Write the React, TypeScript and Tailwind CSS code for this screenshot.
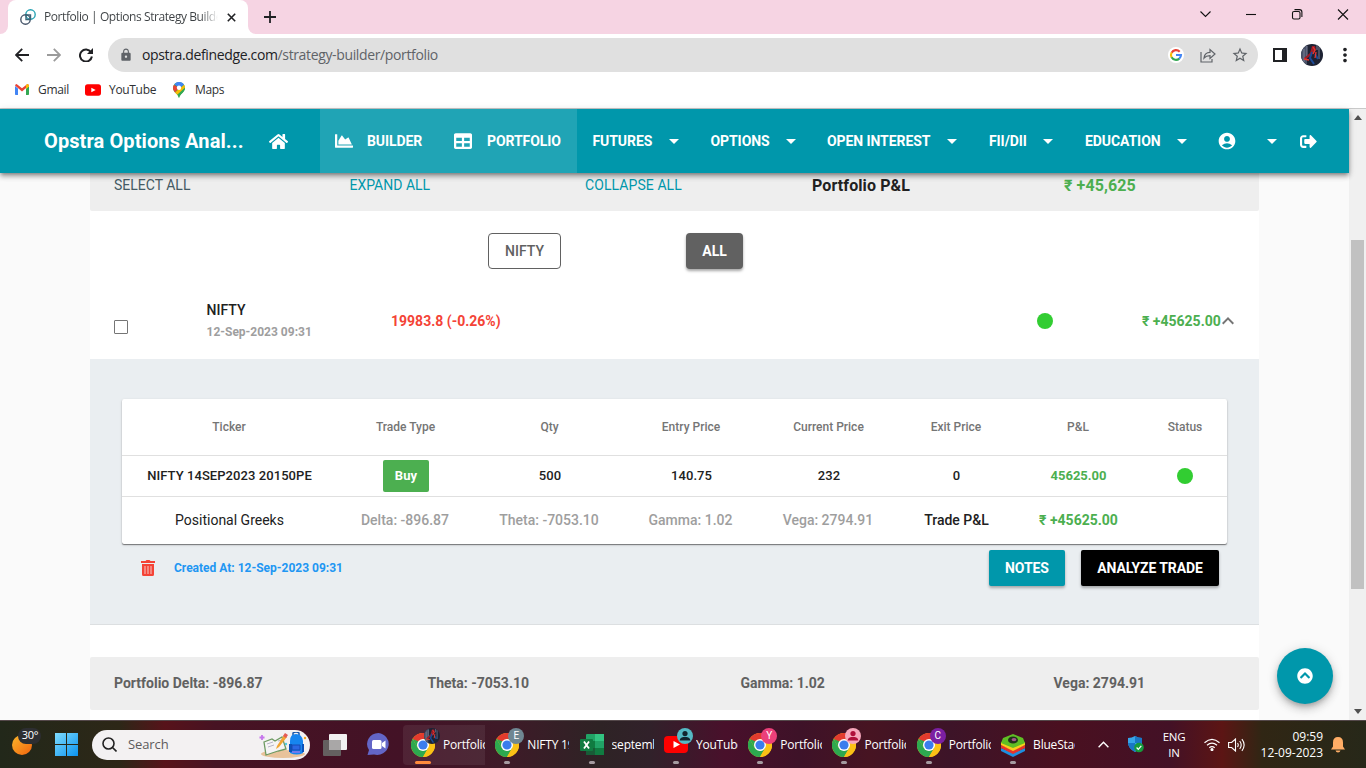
import React from "react";
import { FaHome, FaChartArea, FaTable, FaSignOutAlt, FaChevronCircleUp } from "react-icons/fa";
import { MdArrowDropDown, MdAccountCircle, MdLock, MdStarBorder, MdMoreVert, MdKeyboardArrowUp } from "react-icons/md";

const UI = "font-['Open_Sans','Noto_Sans',sans-serif]";

function ChromeIcon() {
  return (
    <svg width="24" height="24" viewBox="0 0 24 24">
      <circle cx="12" cy="12" r="12" fill="#fbc116" />
      <path d="M12 12 L1.6 6 A12 12 0 0 1 22.4 6 Z" fill="#e33b2e" />
      <path d="M1.6 6 A12 12 0 0 0 12 24 L17.2 15 L12 12 L6.8 15 Z" fill="#2da94f" />
      <path d="M12 6 H22.4 A12 12 0 0 1 12 24 L17.2 15 Z" fill="#fbc116" />
      <path d="M1.6 6 L6.8 15 L9 9 Z" fill="#2da94f" />
      <circle cx="12" cy="12" r="6" fill="#fff" />
      <circle cx="12" cy="12" r="4.6" fill="#3b7ded" />
    </svg>
  );
}

function HeroAvatar({ size }: { size: number }) {
  return (
    <svg width={size} height={size} viewBox="0 0 22 22" className="rounded-full">
      <rect width="22" height="22" fill="#1d2233" />
      <path d="M0 3 L6 0 V22 H0Z" fill="#4a5268" />
      <path d="M3 5v13M6 2v10M18 3v12M16 1v5" stroke="#7b7e96" strokeWidth="1" />
      <path d="M11 2 L14 2 L15 6 L13 9 L9 12 L4 16 L3 14 L9 9 Z" fill="#9c1c28" />
      <path d="M11 8 L9 14 L13 20 M14 10 L17 15" stroke="#1c4a96" strokeWidth="2" fill="none" />
      <path d="M12 3 L14 6 L12 10 M3 15 L8 16 M15 8 L14 14" stroke="#e8362e" strokeWidth="1.3" fill="none" />
    </svg>
  );
}

function ExcelIcon() {
  return (
    <svg width="24" height="24" viewBox="0 0 24 24">
      <rect x="6" y="1" width="18" height="21" rx="1" fill="#21a366" />
      <rect x="15" y="1" width="9" height="7" fill="#33c481" />
      <rect x="6" y="8" width="9" height="7" fill="#107c41" />
      <rect x="6" y="15" width="18" height="7" fill="#185c37" />
      <rect x="15" y="15" width="9" height="7" fill="#107c41" />
      <rect x="0" y="6" width="13" height="12" rx="1" fill="#107c41" />
      <path d="M4 8.5 L9 15.5 M9 8.5 L4 15.5" stroke="#fff" strokeWidth="1.8" />
    </svg>
  );
}

function YouTubeIcon({ w, h }: { w: number; h: number }) {
  return (
    <svg width={w} height={h} viewBox="0 0 24 17">
      <rect width="24" height="17" rx="4" fill="#f00" />
      <path d="M9.5 5 L16 8.5 L9.5 12Z" fill="#fff" />
    </svg>
  );
}

function BlueStacksIcon() {
  return (
    <svg width="24" height="24" viewBox="0 0 24 24">
      <path d="M0 15 L12 20 L24 15 V18 L12 24 L0 18Z" fill="#1c8fe0" />
      <path d="M0 12 L12 17 L24 12 V15 L12 21 L0 15Z" fill="#e5342b" />
      <path d="M0 9 L12 14 L24 9 V12 L12 18 L0 12Z" fill="#f9cf1c" />
      <path d="M2 5 L12 1 L22 5 L24 10 L12 15 L0 10Z" fill="#5fbf24" />
      <ellipse cx="12" cy="7" rx="5" ry="3.6" fill="#22311c" />
      <ellipse cx="13" cy="6.6" rx="2.4" ry="1.7" fill="#a3588c" />
    </svg>
  );
}

function NavText({ label, width, pad }: { label: string; width: string; pad?: string }) {
  return (
    <div className={"flex h-16 items-center justify-between " + width + " " + (pad ?? "")}>
      <span className="whitespace-nowrap">{label}</span>
      <MdArrowDropDown size={24} />
    </div>
  );
}

function Task({ label, children, badge, active }: { label: string; children: React.ReactNode; badge?: React.ReactNode; active?: boolean }) {
  return (
    <div className={"relative flex h-10 w-[82px] shrink-0 items-center overflow-hidden rounded-l pl-2 " + (active ? "bg-white/[.07]" : "")}>
      <div className="flex h-6 w-6 shrink-0 items-center justify-center">{children}</div>
      <div className="absolute left-[21px] top-[3px]">{badge}</div>
      <span className="ml-2 w-[42px] overflow-hidden whitespace-nowrap text-[12px] leading-5 tracking-[-0.2px] text-white">{label}</span>
      <div className={"absolute bottom-px h-[3px] rounded-full " + (active ? "left-3 w-4 bg-[#ff8a3c]" : "left-[17px] w-[6px] bg-[#a59aa0]")} />
    </div>
  );
}

const badgeBase = "flex h-4 w-4 items-center justify-center rounded-full text-[10px] leading-none font-[Roboto,sans-serif] ";

function PersonBadge({ bg, fg }: { bg: string; fg: string }) {
  return (
    <svg width="16" height="16" viewBox="0 0 16 16">
      <circle cx="8" cy="8" r="8" fill={bg} />
      <circle cx="8" cy="5.6" r="2.6" fill={fg} />
      <path d="M2.7 12.5 C3 9.3 6 9 8 9 S13 9.3 13.3 12.5Z" fill={fg} />
    </svg>
  );
}

const cols = "grid grid-cols-[215px_138px_150px_133px_142px_113px_131px_83px] items-center text-center";

export default function App() {
  return (
    <div className="flex h-[768px] w-[1366px] flex-col overflow-hidden bg-white font-[Roboto,sans-serif]">
      {/* Tab strip */}
      <div className={"flex h-[34px] shrink-0 bg-[#f6d4e3] " + UI}>
        <div className="flex w-2 items-end bg-white"><div className="h-full w-2 rounded-br-lg bg-[#f6d4e3]" /></div>
        <div className="flex w-[240px] items-center rounded-t-lg bg-white pl-3">
          <svg width="16" height="16" viewBox="0 0 16 16" fill="none" strokeWidth="1.4">
            <circle cx="10.5" cy="5.5" r="4.7" stroke="#28a3b3" />
            <circle cx="5.5" cy="10.5" r="4.7" stroke="#47566b" />
            <path d="M6 6h4.5v4.5H6z" stroke="#3a6478" />
          </svg>
          <span className="ml-2 w-[174px] overflow-hidden whitespace-nowrap bg-gradient-to-r from-[#3c4043] from-90% to-transparent bg-clip-text text-[12px] leading-4 tracking-[-0.42px] text-transparent">Portfolio | Options Strategy Builder</span>
          <svg className="ml-[9px]" width="9" height="9" viewBox="0 0 9 9"><path d="M.8 .8 8.2 8.2M8.2 .8 .8 8.2" stroke="#202124" strokeWidth="1.6" /></svg>
        </div>
        <div className="flex w-2 bg-white"><div className="h-full w-2 rounded-bl-lg bg-[#f6d4e3]" /></div>
        <svg className="ml-2 mt-[11px]" width="12" height="12" viewBox="0 0 12 12"><path d="M6 0v12M0 6h12" stroke="#202124" strokeWidth="1.8" /></svg>
        <div className="ml-auto flex items-start pt-[9px]">
          <svg width="166" height="11" viewBox="0 0 166 11" fill="none" stroke="#111" strokeWidth="1.1">
            <path d="M.5 2.5 5.5 7.5 10.5 2.5" />
            <path d="M46 5.5h10" />
            <rect x="92.5" y="2.5" width="7.5" height="7.5" rx="1.5" />
            <path d="M94.5 .6h5a2.4 2.4 0 0 1 2.4 2.4v5" />
            <path d="M138 .5l10 10M148 .5l-10 10" />
          </svg>
        </div>
      </div>

      {/* Address bar */}
      <div className={"flex h-[42px] shrink-0 items-center bg-white " + UI}>
        <svg className="ml-[15px]" width="14" height="14" viewBox="0 0 14 14" fill="none" stroke="#202124" strokeWidth="1.8"><path d="M14 7H1.5M7.2 .8 1 7l6.2 6.2" /></svg>
        <svg className="ml-[18px]" width="14" height="14" viewBox="0 0 14 14" fill="none" stroke="#9b9b9b" strokeWidth="1.8"><path d="M0 7h12.500M6.800 .8 13 7l-6.200 6.200" /></svg>
        <svg className="ml-[18px] mr-[4px]" width="14" height="14" viewBox="0 0 14 14">
          <path d="M12 4.200A6 6 0 1 0 12.900 8.500" fill="none" stroke="#202124" strokeWidth="2" />
          <path d="M14 0v6H8Z" fill="#202124" />
        </svg>
        <div className="ml-[11px] flex h-[34px] w-[1150px] items-center rounded-full bg-[#e0e0e0] pl-[11px] text-[#5f6368]">
          <MdLock size={14} />
          <span className="ml-[9px] whitespace-nowrap text-[14px] leading-5 tracking-[-0.36px]"><span className="text-[#202124]">opstra.definedge.com</span>/strategy-builder/portfolio</span>
          <div className="ml-auto flex items-center pr-[9px]">
            <svg width="16" height="16" viewBox="0 0 16 16">
              <circle cx="8" cy="8" r="8" fill="#fff" />
              <g fill="none" strokeWidth="2.1">
                <path d="M11.7 4.7A5 5 0 0 0 3.6 5.8" stroke="#ea4335" />
                <path d="M3.6 5.6a5 5 0 0 0 0 4.8" stroke="#fbbc05" />
                <path d="M3.6 10.3a5 5 0 0 0 7.7 1.3" stroke="#34a853" />
                <path d="M8 8h5a5 5 0 0 1-1.8 3.7" stroke="#4285f4" />
              </g>
            </svg>
            <svg className="ml-4" width="16" height="15" viewBox="0 0 16 15" fill="none" stroke="#5f6368" strokeWidth="1.2"><path d="M1 4v10h11v-3M4 10c.4-4 2.7-5.5 6-5.6V1.5l5 4.5-5 4.5V7.6C7.3 7.6 5.500 8.2 4 10Z" /></svg>
            <MdStarBorder className="ml-[15px]" size={18} />
          </div>
        </div>
        <svg className="ml-[15px]" width="14" height="14" viewBox="0 0 14 14"><rect x="1" y="1" width="12" height="12" fill="#fff" stroke="#202124" strokeWidth="2" /><rect x="9" y="1" width="5" height="12" fill="#202124" /></svg>
        <div className="ml-[14px]"><HeroAvatar size={22} /></div>
        <MdMoreVert className="ml-[11px] text-[#202124]" size={22} />
      </div>

      {/* Bookmarks */}
      <div className={"flex h-[33px] shrink-0 items-center border-b border-[#c9c9c9] pb-[5px] text-[12px] tracking-[-0.32px] text-[#2f3134] " + UI}>
        <svg className="ml-[15px]" width="14" height="11" viewBox="0 0 14 11">
          <path d="M0 2v8.200q0 .8.800.8H3V4.500Z" fill="#4285f4" />
          <path d="M11 4.500V11h2.200q.8 0 .8-.8V2Z" fill="#34a853" />
          <path d="M0 1.600Q.3 0 1.600 0L7 4.200 12.400 0Q13.700 0 14 1.600L7 7.600Z" fill="#ea4335" />
          <path d="M11 1.100 12.400 0Q13.700 0 14 1.600V2.400L11 5Z" fill="#fbbc04" />
        </svg>
        <span className="ml-[9px] w-[31px]">Gmail</span>
        <div className="ml-4"><YouTubeIcon w={16} h={12} /></div>
        <span className="ml-2 w-[46px]">YouTube</span>
        <svg className="ml-[18px]" width="12" height="16" viewBox="0 0 12 16">
          <path d="M6 0a6 6 0 0 0-6 6c0 4.500 5 5.500 6 10 1-4.500 6-5.500 6-10a6 6 0 0 0-6-6Z" fill="#34a853" />
          <path d="M1 2.800 6 6 2 10.500Q0 8.500 0 6 0 4 1 2.800Z" fill="#ea4335" />
          <path d="M2 10.500 11 2.800Q12 4 12 6L5 13Q3.500 12 2 10.500Z" fill="#fbbc04" />
          <path d="M4.500 12.500 12 5.500C12 10.500 7 11.500 6 16Z" fill="#34a853" />
          <path d="M1.300 2.300A6 6 0 0 1 11 2.500L7 6 5 5Z" fill="#4285f4" />
          <circle cx="6" cy="5.800" r="2.200" fill="#fff" />
        </svg>
        <span className="ml-[10px]">Maps</span>
      </div>

      {/* Page */}
      <div className="flex h-[611px] shrink-0">
        <div className="relative flex w-[1349px] flex-col bg-[#fafafa]">
          <header className="relative z-10 flex h-16 shrink-0 items-center bg-[#0097ab] text-[14px] font-bold tracking-[-0.08px] text-white shadow-[0_2px_4px_-1px_rgba(0,0,0,.35),0_4px_5px_rgba(0,0,0,.2),0_1px_8px_rgba(0,0,0,.12)]">
            <span className="ml-11 w-[210px] whitespace-nowrap text-[20px] tracking-[0.1px]">Opstra Options Anal...</span>
            <div className="flex w-[66px] pl-[15px]"><FaHome size={19} /></div>
            <div className="flex h-16 w-[119px] items-center bg-white/[.125] pl-[15px]">
              <FaChartArea size={18} /><span className="ml-[14px]">BUILDER</span>
            </div>
            <div className="flex h-16 w-[138px] items-center bg-white/[.125] pl-[15px]">
              <FaTable size={18} /><span className="ml-[15px]">PORTFOLIO</span>
            </div>
            <NavText label="FUTURES" width="w-[93px]" pad="ml-[15.500px]" />
            <NavText label="OPTIONS" width="w-[92px]" pad="ml-[25px]" />
            <NavText label="OPEN INTEREST" width="w-[137px]" pad="ml-[24.500px]" />
            <NavText label="FII/DII" width="w-[71px]" pad="ml-[25px]" />
            <NavText label="EDUCATION" width="w-[109px]" pad="ml-[25px]" />
            <MdAccountCircle className="ml-[23px]" size={20} />
            <MdArrowDropDown className="ml-[23px]" size={24} />
            <FaSignOutAlt className="ml-4" size={17} />
          </header>

          <main className="ml-[90px] flex w-[1169px] flex-1 flex-col bg-white">
            <div className="flex h-[38px] shrink-0 items-center rounded-b-xs bg-[#eee] pb-[13px] pl-6 text-[14px] text-[#0097ab]">
              <span className="w-[235.500px] text-[#455a64]">SELECT ALL</span>
              <span className="w-[235.500px]">EXPAND ALL</span>
              <span className="w-[227px] tracking-[0.08px]">COLLAPSE ALL</span>
              <span className="w-[252px] text-[16px] font-bold tracking-[0.1px] text-[#212121]">Portfolio P&amp;L</span>
              <span className="text-[16px] font-bold tracking-[0.1px] text-[#4caf50]">₹ +45,625</span>
            </div>

            <div className="flex h-[80px] shrink-0 items-center text-[14px] font-medium">
              <div className="ml-[398px] flex h-9 w-[73px] items-center justify-center rounded border border-[#616161] text-[#616161]">NIFTY</div>
              <div className="ml-[125px] flex h-9 w-[57px] items-center justify-center rounded bg-[#616161] font-bold text-white shadow-[0_2px_3px_rgba(0,0,0,.35)]">ALL</div>
            </div>

            <div className="flex h-[68px] shrink-0 items-center pb-[8px] text-[14px]">
              <div className="ml-6 mt-[12px] h-[14px] w-[14px] rounded-[1px] border border-[#757575]" />
              <div className="ml-[78.500px] w-[184.500px]">
                <div className="-mt-px h-[23px] leading-[22px] font-medium text-[#212121]">NIFTY</div>
                <div className="h-[21px] text-[12px] leading-[21px] font-bold text-[#9e9e9e]">12-Sep-2023 09:31</div>
              </div>
              <span className="w-[645.500px] font-bold text-[#f44336]">19983.8 (-0.26%)</span>
              <div className="h-4 w-4 rounded-full bg-[#32cd32]" />
              <span className="ml-[89.500px] w-[79px] whitespace-nowrap font-bold text-[#4caf50]">₹ +45625.00</span>
              <MdKeyboardArrowUp className="-ml-[5px] text-[#757575]" size={24} />
            </div>

            <section className="h-[266px] shrink-0 border-b border-[#dcdfe1] bg-[#eaeef1] pt-10 pl-8">
              <div className="w-[1105px] rounded-xs bg-white shadow-[0_1px_1px_rgba(0,0,0,.45),0_1px_3px_rgba(0,0,0,.15)]">
                <div className={cols + " h-[57px] border-b border-[#e0e0e0] text-[12px] font-medium text-[#757575]"}>
                  {["Ticker", "Trade Type", "Qty", "Entry Price", "Current Price", "Exit Price", "P&L", "Status"].map((h) => <span key={h} className="-ml-px">{h}</span>)}
                </div>
                <div className={cols + " h-[41px] border-b border-[#e0e0e0] text-[13px] font-medium tracking-[0.07px] text-[#212121]"}>
                  <span>NIFTY 14SEP2023 20150PE</span>
                  <span className="mx-auto flex h-8 w-[46px] items-center justify-center rounded-xs bg-[#4caf50] font-bold text-white">Buy</span>
                  <span>500</span><span>140.75</span><span>232</span><span>0</span>
                  <span className="font-bold tracking-normal text-[#4caf50]">45625.00</span>
                  <span className="-mt-px ml-[33px] h-4 w-4 rounded-full bg-[#32cd32]" />
                </div>
                <div className={cols + " h-[47px] text-[14px] font-medium text-[#9e9e9e]"}>
                  <span className="font-normal text-[#212121]">Positional Greeks</span>
                  <span className="-ml-[2px]">Delta: -896.87</span><span className="-ml-[2px]">Theta: -7053.10</span><span className="-ml-[2px]">Gamma: 1.02</span><span className="-ml-[2px]">Vega: 2794.91</span>
                  <span className="text-[#212121]">Trade P&amp;L</span>
                  <span className="font-bold text-[#4caf50]">₹ +45625.00</span>
                </div>
              </div>
              <div className="mt-[6px] flex h-9 w-[1105px] items-center text-[14px] font-bold tracking-[-0.08px] text-white">
                <svg className="ml-[19px]" width="14" height="16" viewBox="0 0 14 16">
                  <path d="M0 1h4.500L5.500 0h3l1 1H14v2H0ZM1 4h12v10.500q0 1.500-1.500 1.500h-9Q1 16 1 14.500Z" fill="#f44336" />
                  <path d="M4 6v8M7 6v8M10 6v8" stroke="#f5a39d" strokeWidth="1.4" />
                </svg>
                <span className="ml-[19px] text-[12px] tracking-normal text-[#2196f3]">Created At: 12-Sep-2023 09:31</span>
                <div className="ml-auto flex h-9 w-[76px] items-center justify-center rounded-xs bg-[#0097ab] shadow-[0_2px_3px_rgba(0,0,0,.3)]">NOTES</div>
                <div className="mr-2 ml-4 flex h-9 w-[138px] items-center justify-center rounded-xs bg-black shadow-[0_2px_3px_rgba(0,0,0,.3)]">ANALYZE TRADE</div>
              </div>
            </section>

            <div className="mt-8 flex h-[53px] shrink-0 items-center rounded-xs bg-[#eee] pl-6 text-[14px] font-bold text-[#616161]">
              <span className="w-[313.500px]">Portfolio Delta: -896.87</span>
              <span className="w-[313px]">Theta: -7053.10</span>
              <span className="w-[313px]">Gamma: 1.02</span>
              <span>Vega: 2794.91</span>
            </div>
          </main>

          <div className="absolute top-[539px] left-[1277px] flex h-14 w-14 items-center justify-center rounded-full bg-[#0097ab] text-white shadow-[0_3px_5px_-1px_rgba(0,0,0,.2),0_6px_10px_rgba(0,0,0,.14),0_1px_12px_rgba(0,0,0,.12)]">
            <FaChevronCircleUp size={16} />
          </div>
        </div>
        <div className="flex w-[17px] flex-col items-center bg-[#f0f0f0] pt-[6px]">
          <svg width="8" height="5" viewBox="0 0 8 5"><path d="M4 0 8 5H0Z" fill="#505050" /></svg>
          <div className="mt-[120px] h-[349px] w-[13px] bg-[#c1c1c1]" />
          <svg className="mt-[120px]" width="8" height="5" viewBox="0 0 8 5"><path d="M0 0h8L4 5Z" fill="#505050" /></svg>
        </div>
      </div>

      {/* Taskbar */}
      <div className={"flex h-12 shrink-0 items-center border-t border-[#54484a] bg-[linear-gradient(90deg,#22281a_0px,#2d2717_120px,#57131a_165px,#471323_215px,#431226_400px,#3f1a28_500px,#2e2325_600px,#31212a_650px,#49102b_725px,#3e1228_800px,#471422_870px,#3d1428_950px,#4a1020_1060px,#431126_1170px,#5c1514_1222px,#302614_1262px,#272819_1366px)] " + UI}>
        <div className="relative ml-3 h-6 w-[28px]">
          <div className="mt-[2px] h-5 w-5 rounded-full bg-gradient-to-br from-[#f9b62b] to-[#f0610c]" />
          <div className="absolute -top-[5px] left-[6px] flex h-4 w-[23px] items-center justify-center rounded-full bg-[#2d2e31] pl-px text-[11px] tracking-[-0.3px] text-white">30°</div>
        </div>
        <svg className="ml-[15px]" width="23" height="23" viewBox="0 0 23 23">
          <defs><linearGradient id="win" x1="0" y1="0" x2="1" y2="1"><stop stopColor="#7fdcff" /><stop offset="1" stopColor="#0b93f0" /></linearGradient></defs>
          <path d="M0 0h11v11H0ZM12 0h11v11H12ZM0 12h11v11H0ZM12 12h11v11H12Z" fill="url(#win)" />
        </svg>
        <div className="ml-[14px] flex h-[30px] w-[218px] items-center rounded-full bg-[#f3f1f2] pl-[10px]">
          <svg width="15" height="15" viewBox="0 0 15 15" fill="none" stroke="#222" strokeWidth="1.6"><circle cx="6.500" cy="6.500" r="5.500" /><path d="m10.500 10.500 4 4" /></svg>
          <span className="ml-[11px] text-[13px] tracking-[-0.1px] text-[#5d5b5c]">Search</span>
          <svg className="mr-[3px] ml-auto" width="48" height="26" viewBox="0 0 48 26">
            <ellipse cx="24" cy="22" rx="22" ry="4" fill="#e8c29a" />
            <path d="M5 10 13 7l3 2 7-4 4 12-8 2-3 1-9 3Z" fill="#f6f4f5" stroke="#6d9a62" strokeWidth="1.300" />
            <path d="m8 12 6-2m-5 5 6-2m4-4 4-1" stroke="#b8b4c8" />
            <path d="m18 14 7-11 3 2-8 10-3 2Z" fill="#f3a533" /><path d="m24 4 2-3 3 2-2 3Z" fill="#e45c55" />
            <path d="M2 3v5M-.5 5.500h5" transform="translate(1)" stroke="#c675ec" strokeWidth="1.800" />
            <path d="M34 4V1q3-2 6 0v3" stroke="#1857aa" strokeWidth="1.500" fill="none" />
            <path d="M31 9q0-7 6-7t7 7v12q-6 3-13 0Z" fill="#1685ef" />
            <path d="M30 12h3v8h-3ZM43 12h2v8h-2Z" fill="#0b51b8" /><path d="M33 13h8v5h-8Z" fill="#2b67e2" stroke="#174ab4" />
            <path d="M33 20h8" stroke="#8d79ed" strokeWidth="1.500" /><circle cx="46" cy="6" r="1.200" fill="#f5a623" /><circle cx="27" cy="12" r="1.200" fill="#50cbe2" />
          </svg>
        </div>
        <svg className="ml-[13px]" width="24" height="22" viewBox="0 0 24 22">
          <rect x="6" y="0" width="18" height="16" rx="1" fill="#f1f1f1" /><rect x="0" y="6" width="18" height="16" rx="1" fill="#646060" /><rect x="6" y="6" width="12" height="10" fill="#a9a7a7" />
        </svg>
        <svg className="ml-5" width="23" height="23" viewBox="0 0 23 23">
          <path d="M11.500 0A11.500 11 0 1 1 7 21.500L.5 22 2 17A11.500 11 0 0 1 11.500 0Z" fill="#6366c7" />
          <rect x="5" y="7" width="9.500" height="9" rx="1.500" fill="#fff" /><path d="m15 10 3.500-2.500v8L15 13Z" fill="#fff" />
        </svg>
        <div className="ml-[13px] flex gap-[2.300px]">
          <Task label="Portfolio |" active badge={<HeroAvatar size={16} />}><ChromeIcon /></Task>
          <Task label="NIFTY 19983" badge={<div className={badgeBase + "bg-[#6f8792] text-white"}>E</div>}><ChromeIcon /></Task>
          <Task label="september"><ExcelIcon /></Task>
          <Task label="YouTube" badge={<PersonBadge bg="#55b9c4" fg="#12252e" />}><YouTubeIcon w={24} h={17} /></Task>
          <Task label="Portfolio |" badge={<div className={badgeBase + "bg-[#ec407a] text-white"}>Y</div>}><ChromeIcon /></Task>
          <Task label="Portfolio |" badge={<PersonBadge bg="#f6a7bb" fg="#b00f3a" />}><ChromeIcon /></Task>
          <Task label="Portfolio |" badge={<div className={badgeBase + "bg-[#7b1fa2] text-white"}>C</div>}><ChromeIcon /></Task>
          <Task label="BlueStacks"><BlueStacksIcon /></Task>
        </div>
        <svg className="ml-[23px]" width="11" height="7" viewBox="0 0 11 7"><path d="m.6 6.200 4.900-5 4.900 5" fill="none" stroke="#fff" strokeWidth="1.400" /></svg>
        <svg className="ml-[19px]" width="16" height="17" viewBox="0 0 16 17">
          <path d="M7 0q3 2 7 2v5q0 5-7 9Q0 12 0 7V2q4 0 7-2Z" fill="#37a5e8" /><path d="M7 0q3 2 7 2v5H7ZM0 7h7v9Q0 12 0 7Z" fill="#1976c5" />
          <circle cx="11" cy="11.500" r="4.800" fill="#159b3c" /><path d="m8.600 11.500 1.700 1.800 3-3.500" fill="none" stroke="#fff" strokeWidth="1.200" />
        </svg>
        <div className="ml-[17px] w-[26px] text-center text-[11.500px] leading-4 tracking-[-0.200px] text-white">ENG<br />IN</div>
        <svg className="ml-[17px]" width="16" height="13" viewBox="0 0 16 13" fill="none" stroke="#fff" strokeWidth="1.200">
          <path d="M.5 4.800q7.500-7 15 0M3 7.300q5-4.500 10 0M5.300 9.700q2.700-2.300 5.400 0" /><circle cx="8" cy="11.500" r="1" fill="#fff" />
        </svg>
        <svg className="ml-2" width="17" height="14" viewBox="0 0 17 14" fill="none" stroke="#fff" strokeWidth="1.100">
          <path d="M.600 4.500h3L7.500 1v12l-3.900-3.500h-3ZM9.500 5q1.500 2 0 4M11.700 3q3 4 0 8M13.900 1.200q4.500 5.800 0 11.600" />
        </svg>
        <div className="ml-auto mr-2 text-right text-[12px] leading-4 tracking-[-0.020px] text-white">09:59<br />12-09-2023</div>
        <svg className="mr-[21px]" width="14" height="16" viewBox="0 0 14 16"><path d="M7 0q5 0 5 5.500v4l2 3H0l2-3v-4Q2 0 7 0ZM4.500 13.500h5q-.5 2-2.500 2t-2.500-2Z" fill="#ffad66" /></svg>
      </div>
    </div>
  );
}
